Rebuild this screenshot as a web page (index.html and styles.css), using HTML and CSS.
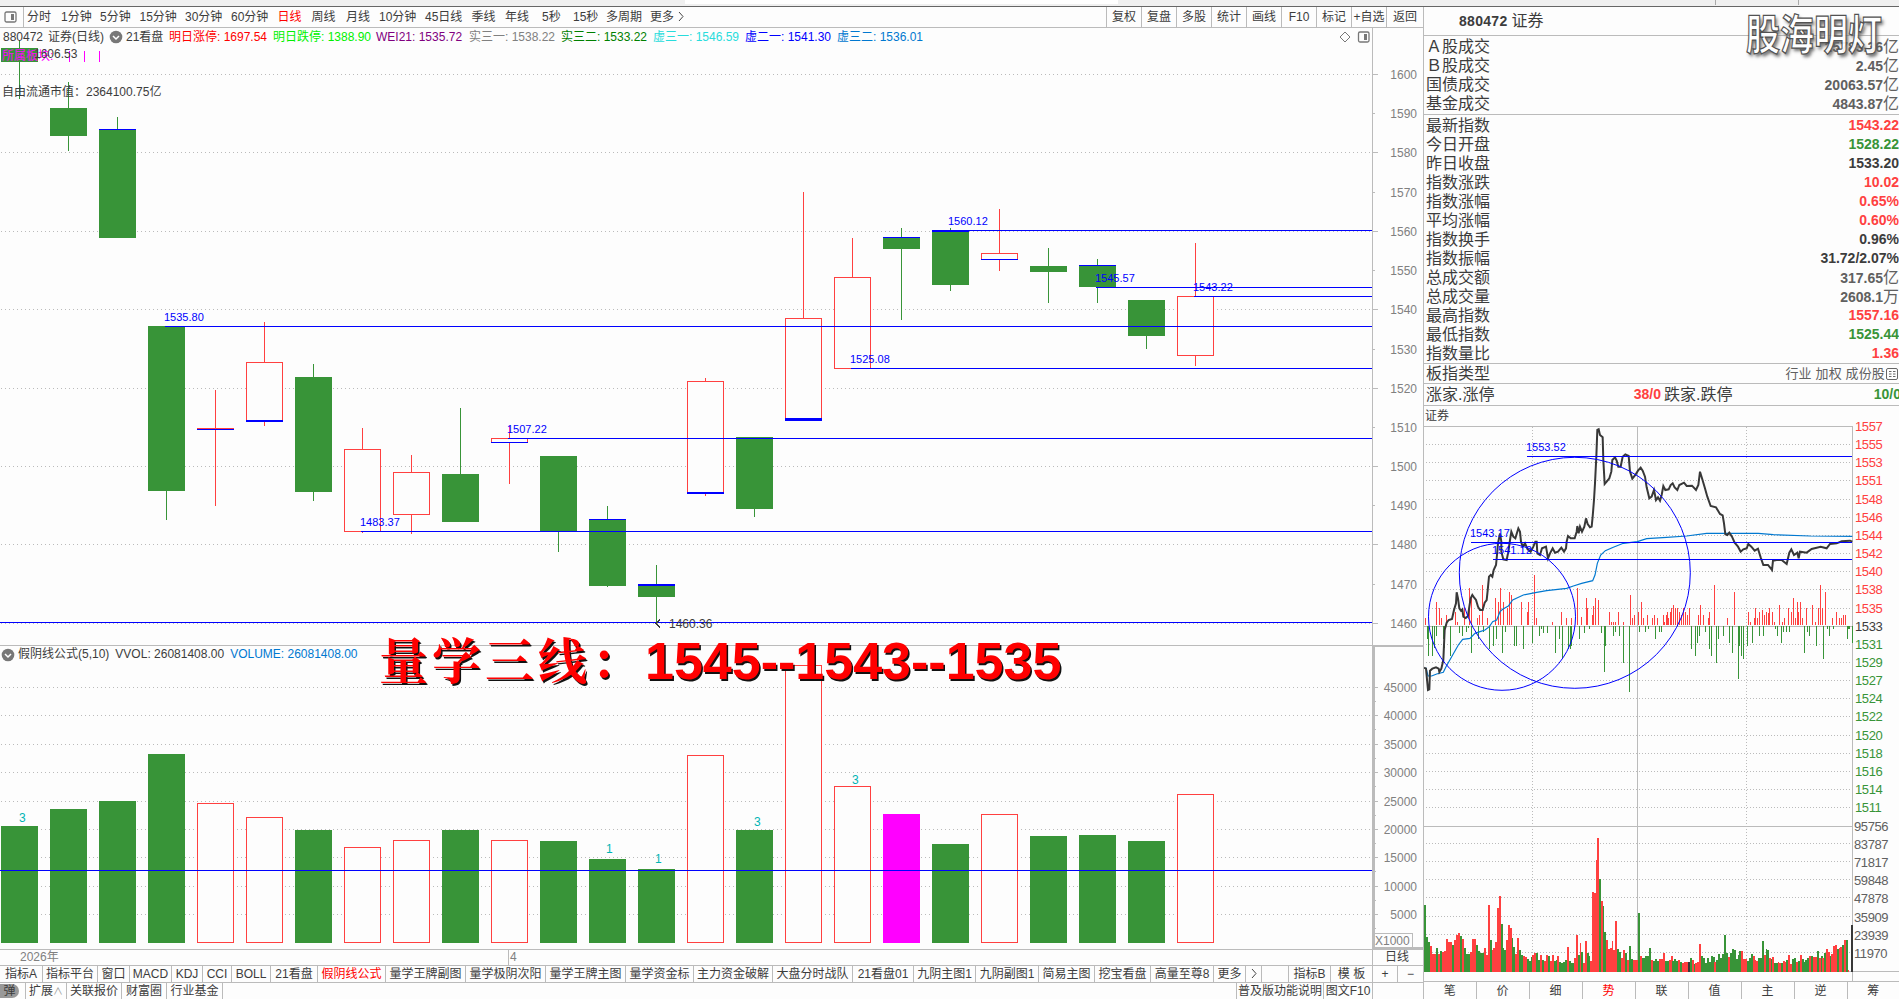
FILE: index.html
```html
<!DOCTYPE html>
<html lang="zh-CN">
<head>
    <meta charset="UTF-8">
    <title>880472 证券</title>
    <link rel="stylesheet" href="styles.css">
</head>
<body>
    <div class="topstrip"><span class="strip-tab"></span><span class="strip-sep"></span><span class="strip-sep"></span></div>
    <div class="main">
        <div class="left">
            <div class="toolbar">
                <div class="panel-icon"><svg width="13" height="12"><rect x="1" y="1" width="11" height="10" rx="1.5" fill="none" stroke="#777" stroke-width="1.3"/><rect x="7" y="3" width="3" height="6" fill="#777"/></svg></div>
                <div class="periods">
                    <span>分时</span><span>1分钟</span><span>5分钟</span><span>15分钟</span><span>30分钟</span><span>60分钟</span><span class="active">日线</span><span>周线</span><span>月线</span><span>10分钟</span><span>45日线</span><span>季线</span><span>年线</span><span>5秒</span><span>15秒</span><span>多周期</span><span>更多</span><span><svg width="6" height="11"><path d="M1 1l4 4.5l-4 4.5" fill="none" stroke="#444"/></svg></span>
                </div>
                <div class="tools">
                    <span>复权</span><span>复盘</span><span>多股</span><span>统计</span><span>画线</span><span>F10</span><span>标记</span><span>+自选</span><span>返回</span>
                </div>
            </div>
            <div class="chart">
                <div class="indicators">
                    <span>880472</span><span>证券(日线)</span>
                    <span class="drop"><svg width="14" height="14"><circle cx="7" cy="7" r="6.3" fill="#777"/><path d="M4 6l3 3l3-3" fill="none" stroke="#fff" stroke-width="1.5"/></svg></span>
                    <span>21看盘</span>
                    <span class="red">明日涨停: 1697.54</span>
                    <span class="lime">明日跌停: 1388.90</span>
                    <span class="purple">WEI21: 1535.72</span>
                    <span class="gray">实三一: 1538.22</span>
                    <span class="green">实三二: 1533.22</span>
                    <span class="cyan">虚三一: 1546.59</span>
                    <span class="blue">虚二一: 1541.30</span>
                    <span class="sky">虚三二: 1536.01</span>
                    <span class="corner"><svg width="32" height="14"><path d="M6 2l5 5l-5 5l-5-5z" fill="none" stroke="#777"/><rect x="19.500" y="2" width="10.500" height="10" rx="1.500" fill="none" stroke="#777" stroke-width="1.300"/><rect x="25" y="4" width="3" height="6" fill="#777"/></svg></span>
                </div>
                <svg class="kline" id="kline" width="1423" height="921" viewBox="0 28 1423 921"></svg>
                <div class="volume-info">
                    <svg width="14" height="14"><circle cx="7" cy="7" r="6.3" fill="#777"/><path d="M4 6l3 3l3-3" fill="none" stroke="#fff" stroke-width="1.5"/></svg>
                    <span>假阴线公式(5,10)</span><span>VVOL: 26081408.00</span><span class="sky">VOLUME: 26081408.00</span>
                </div>
                <div class="caption"><span class="caption-cn">量学三线：</span><span>1545--1543--1535</span></div>
            </div>
            <div class="dates"><span class="year">2026年</span><span class="month">4</span><span class="cycle">日线</span></div>
            <div class="tabs">
                <span>指标A</span><span>指标平台</span><span>窗口</span><span>MACD</span><span>KDJ</span><span>CCI</span><span>BOLL</span><span>21看盘</span><span class="active">假阴线公式</span><span>量学王牌副图</span><span>量学极阴次阳</span><span>量学王牌主图</span><span>量学资金标</span><span>主力资金破解</span><span>大盘分时战队</span><span>21看盘01</span><span>九阴主图1</span><span>九阴副图1</span><span>简易主图</span><span>挖宝看盘</span><span>高量至尊8</span><span>更多</span><span><svg width="6" height="11"><path d="M1 1l4 4.5l-4 4.5" fill="none" stroke="#444"/></svg></span><span></span><span>指标B</span><span>模 板</span><span>+</span><span>−</span>
            </div>
            <div class="footer">
                <span class="badge-cell"><b>弹</b></span><span>扩展<i>∧</i></span><span>关联报价</span><span>财富圈</span><span>行业基金</span><span></span><span>普及版功能说明</span><span>图文F10</span><span></span>
            </div>
        </div>
        <div class="right">
            <div class="stock"><b>880472</b><span>证券</span></div>
            <div class="watermark">股海明灯</div>
            <div class="quotes">
                <div class="row"><span>Ａ股成交</span><b class="dim">25783.36<i>亿</i></b></div>
                <div class="row"><span>Ｂ股成交</span><b class="dim">2.45<i>亿</i></b></div>
                <div class="row"><span>国债成交</span><b class="dim">20063.57<i>亿</i></b></div>
                <div class="row"><span>基金成交</span><b class="dim">4843.87<i>亿</i></b></div>
            </div>
            <div class="quotes second">
                <div class="row"><span>最新指数</span><b class="up">1543.22</b></div>
                <div class="row"><span>今日开盘</span><b class="down">1528.22</b></div>
                <div class="row"><span>昨日收盘</span><b>1533.20</b></div>
                <div class="row"><span>指数涨跌</span><b class="up">10.02</b></div>
                <div class="row"><span>指数涨幅</span><b class="up">0.65%</b></div>
                <div class="row"><span>平均涨幅</span><b class="up">0.60%</b></div>
                <div class="row"><span>指数换手</span><b>0.96%</b></div>
                <div class="row"><span>指数振幅</span><b>31.72/2.07%</b></div>
                <div class="row"><span>总成交额</span><b class="dim">317.65<i>亿</i></b></div>
                <div class="row"><span>总成交量</span><b class="dim">2608.1<i>万</i></b></div>
                <div class="row"><span>最高指数</span><b class="up">1557.16</b></div>
                <div class="row"><span>最低指数</span><b class="down">1525.44</b></div>
                <div class="row"><span>指数量比</span><b class="up">1.36</b></div>
            </div>
            <div class="row kind"><span>板指类型</span><em>行业 加权 成份股<svg width="14" height="14"><rect x="1.500" y="1.500" width="11" height="11" rx="1.500" fill="none" stroke="#666"/><path d="M4 4.500h2.500M8 4.500h2.500M4 7h2.500M8 7h2.500M4 9.500h2.500M8 9.500h2.500" stroke="#666"/></svg></em></div>
            <div class="counts"><span>涨家.涨停</span><b class="up">38/0</b><span>跌家.跌停</span><b class="down">10/0</b></div>
            <div class="mini-title">证券</div>
            <svg class="intraday" id="intraday" width="475" height="555" viewBox="1424 426 475 555">
                <g id="igrid"></g>
                <g transform="translate(1400 400) scale(.33333)" fill="none">
                    <path id="upTicks" class="tick-up"/>
                    <path id="downTicks" class="tick-down"/>
                    <path class="average" d="M78 803L84 828L95 828L110 822L130 817L138 800L155 770L175 735L188 718L210 715L225 700L240 695L255 690L268 680L278 665L290 660L300 635L308 628L325 618L338 600L370 585L410 577L440 572L500 565L520 558L545 550L578 542L585 525L592 490L602 465L616 452L640 442L670 430L712 425L740 416L800 412L860 408L920 400L1075 400L1120 404L1230 408L1357 409"/>
                    <path class="price" d="M72 803L78 806L84 870L88 868L90 812L97 806L108 802L116 806L118 816L124 806L130 780L134 690L140 668L146 660L156 657L162 630L168 610L170 577L174 595L178 625L183 632L187 628L190 650L197 654L204 648L208 620L212 595L217 585L222 592L228 600L234 620L240 630L248 630L254 608L260 600L263 572L267 530L272 525L277 530L281 510L288 495L291 465L294 430L300 400L304 425L304 455L310 478L320 480L325 455L330 420L334 395L340 410L346 415L352 395L355 385L360 395L363 425L368 440L375 430L383 448L392 455L400 440L406 425L410 425L412 460L420 465L426 445L438 440L444 475L450 460L458 445L465 458L474 455L484 443L492 455L498 445L500 425L504 408L512 415L524 415L530 395L532 378L536 400L540 380L546 395L553 380L558 355L563 372L570 382L575 380L578 350L582 300L585 250L589 170L592 90L596 88L600 105L608 112L610 180L614 252L620 245L628 235L634 215L637 180L645 172L650 182L655 200L662 200L668 170L676 163L686 168L690 215L697 236L706 225L714 212L722 203L728 212L735 230L740 262L748 295L755 290L762 270L768 300L774 292L780 302L785 285L790 258L796 270L806 268L812 255L818 250L824 262L832 270L838 255L852 248L860 258L876 257L888 270L895 255L900 215L906 235L914 262L922 290L932 318L948 322L960 342L968 346L972 370L976 403L982 405L988 398L996 410L1004 428L1014 440L1022 455L1030 448L1040 445L1045 432L1054 440L1064 452L1074 446L1082 472L1090 495L1104 495L1116 510L1119 482L1130 480L1145 480L1160 492L1168 458L1174 448L1182 465L1192 458L1196 475L1200 455L1220 458L1235 447L1262 440L1280 445L1290 432L1310 430L1325 424L1350 422L1357 425"/>
                </g>
                <g id="ivol"></g>
                <g class="marks">
                    <path d="M1527 456.500H1852M1471 542.500H1852M1493 559.500H1852"/>
                    <circle cx="1502" cy="616.800" r="73.500"/>
                    <circle cx="1574.800" cy="572.800" r="115.500"/>
                </g>
                <g class="mark-text">
                    <text x="1526" y="451">1553.52</text>
                    <text x="1470" y="537">1543.17</text>
                    <text x="1492" y="554">1541.12</text>
                </g>
            </svg>
            <div class="side-tabs"><span>笔</span><span>价</span><span>细</span><span class="active">势</span><span>联</span><span>值</span><span>主</span><span>逆</span><span>筹</span></div>
        </div>
    </div>
    <script src="chart.js"></script>
</body>
</html>
```
FILE: styles.css
```css
body {
    margin: 0;
    width: 1899px;
    height: 999px;
    overflow: hidden;
    background-color: #fdfdfd;
    color: #3c3c3c;
    font-family: "Liberation Sans", "Noto Sans CJK SC", sans-serif;
    font-size: 12px;
    line-height: 17px;
    white-space: nowrap;
}

i, em {
    font-style: normal;
}

.red, .active { color: #f00; }
.lime { color: #00f000; }
.purple { color: #800080; }
.gray { color: #808080; }
.green { color: #008000; }
.cyan { color: #28dcdc; }
.blue { color: #00f; }
.sky { color: #0078d0; }
.up { color: #ff4040; }
.down { color: #389438; }
.dim { color: #606060; }

/* window tabs cut off at the top */
.topstrip {
    box-sizing: border-box;
    height: 7px;
    display: flex;
    background-color: #f0f0f0;
    border-bottom: 1px solid #666;
}

.strip-tab {
    width: 433px;
    height: 4px;
    margin-left: 685px;
    background-color: #fff;
}

.strip-sep {
    width: 1px;
    height: 5px;
    margin-left: 597px;
    background-color: #aaa;
}

.strip-sep + .strip-sep {
    margin-left: 82px;
}

.main {
    display: flex;
    height: 992px;
}

.left {
    width: 1423px;
    display: flex;
    flex-direction: column;
}

.toolbar {
    height: 20px;
    display: flex;
    border-bottom: 1px solid #bbb;
    line-height: 21px;
}

.panel-icon {
    box-sizing: border-box;
    width: 24px;
    padding: 4px 0 0 4px;
    line-height: 0;
    border-right: 1px solid #bbb;
}

.periods {
    display: grid;
    grid-template-columns: 34px 39px 39.5px 45.5px 46px 46.5px 34px 34.5px 33px 46px 46.5px 33.5px 37px 31px 33px 44px 28px 20px;
    padding-left: 3px;
}

.periods svg, .tabs svg {
    vertical-align: -1px;
}

.tools {
    display: flex;
    margin-left: auto;
}

.tools span {
    box-sizing: border-box;
    width: 35px;
    text-align: center;
    border-left: 1px solid #bbb;
}

.tools span:last-child {
    width: 37px;
}

.chart {
    position: relative;
    height: 921px;
}

.kline {
    display: block;
}

.indicators {
    position: absolute;
    top: 1px;
    left: 3px;
    right: 52px;
    display: grid;
    grid-template-columns: 45px 61px 17px 43px 104px 103px 93px 92px 92px 92px 92px 92px 1fr;
}

.drop svg, .corner svg {
    margin-top: 1px;
    display: block;
}

.corner {
    justify-self: end;
}

.volume-info {
    position: absolute;
    left: 1px;
    top: 618px;
    display: flex;
    gap: 6px;
    align-items: center;
}

.volume-info svg {
    margin-right: -3px;
}

.caption {
    position: absolute;
    left: 379px;
    top: 598px;
    display: flex;
    align-items: baseline;
    font-size: 52px;
    font-weight: bold;
    line-height: 64px;
    color: #f00;
    text-shadow: 1.5px 1.5px 0 #111;
}

.caption-cn {
    width: 266px;
    font-family: "Noto Serif CJK SC", "Noto Sans CJK SC", serif;
    font-size: 49px;
    letter-spacing: 4px;
}

.dates, .tabs, .footer {
    display: grid;
    border-top: 1px solid #bbb;
}

.dates {
    height: 15px;
    line-height: 15px;
    grid-template-columns: 508px 864px 51px;
    color: #808080;
}

.year {
    padding-left: 20px;
}

.month {
    padding-left: 1px;
    border-left: 1px solid #bbb;
}

.cycle {
    padding-left: 12px;
    border-left: 1px solid #bbb;
    color: #3c3c3c;
}

.tabs {
    height: 16px;
    line-height: 16px;
    grid-template-columns: 43px 55px 32px 42px 31px 29px 39px 47px 68px 80px 80px 80px 68px 79px 80px 61px 62px 63px 56px 56px 63px 32px 16px 27px 42px 42px 25px 25px;
}

.tabs span, .footer span {
    box-sizing: border-box;
    text-align: center;
    border-right: 1px solid #bbb;
    overflow: hidden;
}

.tabs span:last-child, .footer span:last-child {
    border-right: 0;
}

.footer {
    flex: 1;
    line-height: 17px;
    grid-template-columns: 26px 41px 55px 45px 56px 1014px 87px 49px 50px;
}

.footer i {
    color: #999;
    font-size: 10px;
}

.badge-cell b {
    display: block;
    width: 19px;
    height: 14px;
    margin-top: 1px;
    border-radius: 0 8px 8px 0;
    background-color: #999;
    font-weight: normal;
    line-height: 14px;
}

/* quote panel */
.right {
    position: relative;
    box-sizing: border-box;
    width: 476px;
    border-left: 1px solid #bbb;
    overflow: hidden;
}

.stock {
    height: 28px;
    padding-left: 35px;
    display: flex;
    gap: 4px;
    align-items: center;
    line-height: 26px;
    border-bottom: 1px solid #bbb;
    font-size: 16px;
}

.stock b {
    font-size: 14px;
    letter-spacing: .3px;
}

.watermark {
    position: absolute;
    left: 322px;
    top: 6px;
    font-size: 34px;
    font-weight: bold;
    line-height: 44px;
    color: #fff;
    opacity: .92;
    -webkit-text-stroke: 1px #444;
    text-shadow: 2px 2px 3px #666;
    transform: scaleY(1.25);
}

.quotes {
    box-sizing: border-box;
    height: 79px;
    padding-top: 1px;
    border-bottom: 1px solid #bbb;
}

.quotes.second {
    height: 249px;
}

.row {
    height: 19px;
    padding: 0 0 0 2px;
    display: flex;
    justify-content: space-between;
    align-items: center;
    line-height: 19px;
    font-size: 16px;
}

.row b, .counts b {
    font-size: 14px;
    line-height: 19px;
}

.row i {
    font-size: 16px;
    font-weight: normal;
}

.row.kind {
    border-bottom: 1px solid #bbb;
}

.kind em {
    display: flex;
    align-items: center;
    font-size: 13px;
    letter-spacing: .15px;
    color: #606060;
}

.counts {
    height: 21px;
    padding-left: 2px;
    display: grid;
    grid-template-columns: 163px 75px 71px 1fr;
    border-bottom: 1px solid #bbb;
    font-size: 16px;
    line-height: 21px;
}

.counts b {
    text-align: right;
    padding-right: 3px;
    line-height: 21px;
}

.counts .down {
    margin-right: -5px;
}

.mini-title {
    height: 20px;
    padding-left: 1px;
    line-height: 20px;
}

.intraday {
    display: block;
    overflow: visible;
}

.side-tabs {
    height: 18px;
    display: grid;
    grid-template-columns: 51.5px repeat(7, 53px) 1fr;
    border-top: 1px solid #bbb;
    line-height: 18px;
    text-align: center;
}

.side-tabs span + span {
    border-left: 1px solid #bbb;
}

/* svg parts */
svg text {
    font-size: 12px;
}

.kline path, .kline rect, .intraday rect, .intraday #igrid path, .tick-up, .tick-down {
    shape-rendering: crispEdges;
}

.frame {
    fill: none;
    stroke: #bbb;
}

.frame-bold {
    fill: none;
    stroke: #bbb;
    stroke-width: 2;
}

.dots {
    fill: none;
    stroke: #bbb;
    stroke-dasharray: 1 3;
}

#igrid .dots {
    stroke-dasharray: 1 2;
}

.axis-text {
    fill: #808080;
}

.fall {
    fill: #389438;
    stroke: #389438;
}

.rise {
    fill: #fdfdfd;
    stroke: #ff4040;
}

.special {
    fill: #f0f;
    stroke: #f0f;
}

.level {
    fill: none;
    stroke: #00f;
}

.arrow {
    fill: none;
    stroke: #3c3c3c;
}

.level-text, .mark-text {
    fill: #00f;
}

.kline .level-text, .mark-text text {
    font-size: 11px;
}

.count {
    fill: #00b4b4;
}

.board {
    fill: #f0f;
}

.plain {
    fill: #3c3c3c;
}

.tick-up {
    stroke: #ff4040;
    stroke-width: 3;
}

.tick-down {
    stroke: #389438;
    stroke-width: 3;
}

.average {
    stroke: #0078d0;
    stroke-width: 3.5;
}

.price {
    stroke: #383838;
    stroke-width: 6;
}

.marks {
    fill: none;
    stroke: #00f;
}

#igrid text {
    font-size: 13px;
    letter-spacing: -.4px;
}

.t-up { fill: #ff4040; }
.t-down { fill: #389438; }
.t-flat { fill: #3c3c3c; }
.t-vol { fill: #606060; }
```
FILE: chart.js
```js
const kline = document.getElementById("kline");
let out = "";

function line(cls, d) {
    return `<path class="${cls}" d="${d}"/>`;
}
function label(cls, x, y, s, anchor) {
    return `<text class="${cls}" x="${x}" y="${y}" text-anchor="${anchor || "start"}">${s}</text>`;
}

// price scale
const priceY = [74, 113, 152, 192, 231, 270, 309, 349, 388, 427, 466, 505, 544, 584, 623];
priceY.forEach((y, i) => {
    if (i % 2 === 0) out += line("dots", `M1 ${y + .5}H1372`);
    out += line("frame", `M1373 ${y + .5}h${i % 2 ? 2 : 5}`);
    out += label("axis-text", 1417, y + 5, 1600 - i * 10, "end");
});

// volume scale
[687, 715, 744, 772, 801, 829, 857, 886, 914].forEach((y, i) => {
    out += line("dots", `M1 ${y + .5}H1372`);
    out += line("frame", `M1374 ${y + .5}h4M1374 ${y + 14.5}h2`);
    out += label("axis-text", 1417, y + 5, 45000 - i * 5000, "end");
});
out += line("frame", "M0 645.5H1373M1372.5 28V949M1374 933.5H1412.5V947");
out += line("frame-bold", "M1423 646H1374V948H1423");
out += label("axis-text", 1375, 945, "X1000");

// type, high, open/close top, bottom, low, thickness of the blue edge, edge side
const candles = [
    ["g", 40, 48, 62, 99], ["g", 82, 108, 136, 151], ["g", 117, 129, 238, 238, 1, "t"],
    ["g", 326, 326, 491, 520], ["r", 390, 428, 429, 506, 1, "b"], ["r", 322, 362, 421, 426, 2, "b"],
    ["g", 364, 377, 492, 501], ["r", 428, 449, 531, 533], ["r", 455, 472, 514, 534],
    ["g", 408, 474, 522, 522], ["r", 426, 438, 442, 484, 1, "b"], ["g", 456, 456, 531, 552],
    ["g", 506, 519, 586, 587, 1, "t"], ["g", 565, 584, 597, 623, 2, "t"], ["r", 378, 381, 493, 496, 2, "b"],
    ["g", 437, 437, 509, 517], ["r", 192, 318, 420, 420, 3, "b"], ["r", 238, 277, 368, 368],
    ["g", 228, 237, 249, 320, 1, "t"], ["g", 228, 230, 285, 291, 2, "t"], ["r", 209, 253, 259, 271, 1, "b"],
    ["g", 248, 266, 272, 303], ["g", 259, 265, 287, 303, 1, "t"], ["g", 300, 300, 336, 349],
    ["r", 243, 296, 355, 366]
];
const volumes = [826, 809, 801, 754, 803, 817, 830, 847, 840, 830, 840, 841, 859, 869, 755, 830, 665, 786, 814, 844, 814, 836, 835, 841, 794];

candles.forEach((c, i) => {
    const x = 1 + i * 49;
    const cls = c[0] === "g" ? "fall" : "rise";
    out += line(cls, `M${x + 18.5} ${c[1]}V${c[4]}`);
    out += `<rect class="${cls}" x="${x + .5}" y="${c[2] + .5}" width="36" height="${Math.max(c[3] - c[2] - (c[0] === "g" ? 1 : 0), 1)}"/>`;
    if (c[5]) {
        const y = c[6] === "t" ? c[2] : c[3] + 1 - c[5];
        out += `<rect x="${x}" y="${y}" width="37" height="${c[5]}" fill="#00f"/>`;
    }
    out += `<rect class="${i === 18 ? "special" : cls}" x="${x + .5}" y="${volumes[i] + .5}" width="36" height="${942 - volumes[i]}"/>`;
});

// price levels
[[165, 326], [508, 438], [361, 531], [0, 622], [950, 230], [1096, 287], [1194, 296], [851, 368], [0, 870]].forEach(l => {
    out += line("level", `M${l[0]} ${l[1] + .5}H1372`);
});
[[164, 321, "1535.80"], [507, 433, "1507.22"], [360, 526, "1483.37"], [948, 225, "1560.12"],
 [1095, 282, "1545.57"], [1193, 291, "1543.22"], [850, 363, "1525.08"]].forEach(t => {
    out += label("level-text", t[0], t[1], t[2]);
});
[[19, 822, 3], [606, 853, 1], [655, 863, 1], [754, 826, 3], [852, 784, 3]].forEach(t => {
    out += label("count", t[0], t[1], t[2]);
});
out += line("arrow", "M660 619.5l-4 4l4 4");
out += label("plain", 669, 628, "1460.36");
out += label("board", 2, 60, "所属板块:");
out += line("board", "M69 51h1v11h-1zM84 51h1v11h-1zM99 51h1v11h-1z");
out += label("plain", 34, 58, "1606.53");
out += label("plain", 2, 96, "自由流通市值：2364100.75亿");
kline.innerHTML = out;

// intraday grid
let grid = line("frame", "M1424 426.500H1852.500V981M1637.500 426V972M1424 626.500H1852M1424 826.500H1852M1424 971.500H1899");
grid += line("dots", "M1532.500 427V971M1746.500 427V971");
const prices = [1557, 1555, 1553, 1551, 1548, 1546, 1544, 1542, 1540, 1538, 1535, 1533, 1531, 1529, 1527, 1524, 1522, 1520, 1518, 1516, 1514, 1511];
prices.forEach((p, i) => {
    const y = Math.round(426 + i * 18.15);
    if (i && i !== 11) grid += line("dots", `M1426 ${y + .5}H1852`);
    grid += label(i < 11 ? "t-up" : i > 11 ? "t-down" : "t-flat", 1855, y + 4.5, p);
});
[95756, 83787, 71817, 59848, 47878, 35909, 23939, 11970].forEach((v, i) => {
    const y = Math.round(826 + i * 18.1);
    if (i) grid += line("dots", `M1426 ${y - .5}H1852`);
    grid += label("t-vol", 1854, y + 4.5, v);
});
document.getElementById("igrid").innerHTML = grid;

// buy / sell strength around the previous close
const up = "76,655 109,607 118,625 125,655 139,645 166,635 172,667 193,625 208,565 216,595 232,655 239,645 247,555 262,655 286,595 295,607 301,565 310,607 322,625 328,577 334,585 364,607 382,635 385,607 403,525 409,655 457,667 484,635 499,655 514,655 532,565 544,650 559,595 562,625 577,645 580,617 586,595 595,600 628,635 634,667 640,667 646,667 655,635 670,667 691,585 697,655 703,645 715,635 724,605 730,655 742,645 757,655 763,645 772,655 790,645 793,667 799,645 802,635 805,655 811,635 814,625 820,615 826,625 832,625 838,635 844,645 850,625 856,635 862,645 868,625 895,645 901,615 910,645 925,655 928,635 943,555 982,655 1003,577 1045,635 1051,667 1063,655 1066,625 1072,655 1080,635 1089,630 1093,645 1099,635 1105,640 1110,625 1117,635 1123,665 1138,615 1147,667 1153,655 1165,625 1174,635 1180,595 1186,655 1192,605 1195,635 1201,605 1207,655 1219,625 1238,615 1247,667 1255,625 1261,555 1267,625 1276,577 1297,655 1310,635 1318,655 1325,655 1331,645 1336,645";
const down = "82,717 85,768 97,768 103,745 109,707 130,717 133,745 151,768 178,700 187,707 199,695 205,685 214,758 235,717 250,695 268,748 280,738 289,717 307,758 316,697 343,738 349,738 370,747 397,728 418,707 424,687 430,700 442,700 466,758 478,717 487,775 505,747 511,747 514,738 538,717 553,700 568,687 604,700 613,815 616,738 640,707 646,697 658,707 670,788 688,875 718,695 736,697 745,687 766,717 778,697 784,697 874,747 886,768 892,728 898,707 916,697 928,747 934,768 949,788 955,717 970,707 988,728 997,758 1015,837 1018,738 1024,768 1030,777 1042,738 1057,728 1078,707 1090,707 1126,687 1132,707 1144,728 1152,697 1159,697 1168,697 1213,758 1222,697 1228,707 1249,738 1270,777 1282,687 1288,707 1300,687 1342,717 1345,687 1350,687 1357,728";
const ticks = (s, base) => s.split(" ").map(p => {
    const [x, y] = p.split(",");
    return `M${x} ${base}V${y}`;
}).join("");
document.getElementById("upTicks").setAttribute("d", ticks(up, 675));
document.getElementById("downTicks").setAttribute("d", ticks(down, 679));

// minute volume by stretch of time: start, then colour + bar top
const runs = [
    [72, "g315 g411 g427 r438 r462 r462 g444 r462 g453 r456 r453 r417 r426 r426 g435 r420 r405 r399 g408 r417 g444 g462 g462 r456 r417 r417 g435 g453 g459 g459 r444 r465"],
    [264, "r315 g420 r450 r444 r426"],
    [291, "r324 r288 g372 g444 g450 r420 r375 r384 g414 g441 r462"],
    [351, "r414 g450 g465 r468 r471 g477 g483 g471 r465 r459 g459 g480 r465 g480 r483 r465 g468 r483 r465 g483 g480 r468 g486 g489 g486 g480"],
    [501, "r441 g483 g489 g489 r474"],
    [528, "r405 g465 r429 g456 r489 r423 g459 g468 r483"],
    [576, "r276 r279 r180 r114 g237 r303 g318 g396 r420 r447 r444 r423 r450"],
    [645, "r363 g447 g456 r474 r450 g459 r480"],
    [687, "g438 g477 r480 r480 r480"],
    [714, "g339 r468 g474 g474 g468 g468"],
    [747, "g444 r480 g483 g477 g483 r477 r477 r459 g483 g483 r480 r468 g483 g477 g483 r480 g486 r489 r486 r486"],
    [864, "k486 g474 r480 g492 r489 r486"],
    [897, "r432 g468 g474 g489 g474 g486 g468 g471 r486 g480 g462 g474 g462"],
    [972, "g405 g459 r471 g459 g447 g450 g477 g465 g453"],
    [1024, "r453 r477 r477 g483 g474 g462 r468 r480 r483 g474 g474"],
    [1086, "g423 r465 g447 g450 r474 g477 r471 g489 g489 r486 r489 g489 r483 r486 g480"],
    [1164, "r465 r492 g477 g474 r486 g483 r465 g477 g486 g480 g474 r468 g468 r471 r471"],
    [1251, "g453 r474 g468 r474 g459 r447 r456 g468 r462 r438 r435 g447 r444 r441 g435 r420 g420 r511"],
    [1348, ""]
];
const colors = { g: "#389438", r: "#ff4040", k: "#383838" };
let bars = "";
for (let n = 0; n < runs.length - 1; n++) {
    const list = runs[n][1].split(" ");
    const step = (runs[n + 1][0] - runs[n][0]) / list.length / 3;
    list.forEach((m, i) => {
        const h = (515 - m.slice(1)) / 3;
        const x = 1400 + runs[n][0] / 3 + i * step;
        bars += `<rect x="${x.toFixed(1)}" y="${(971.7 - h).toFixed(1)}" width="${(step + .1).toFixed(2)}" height="${h.toFixed(1)}" fill="${colors[m[0]]}"/>`;
    });
}
document.getElementById("ivol").innerHTML = bars + '<rect x="1851" y="925" width="2" height="47" fill="#383838"/>';
```
